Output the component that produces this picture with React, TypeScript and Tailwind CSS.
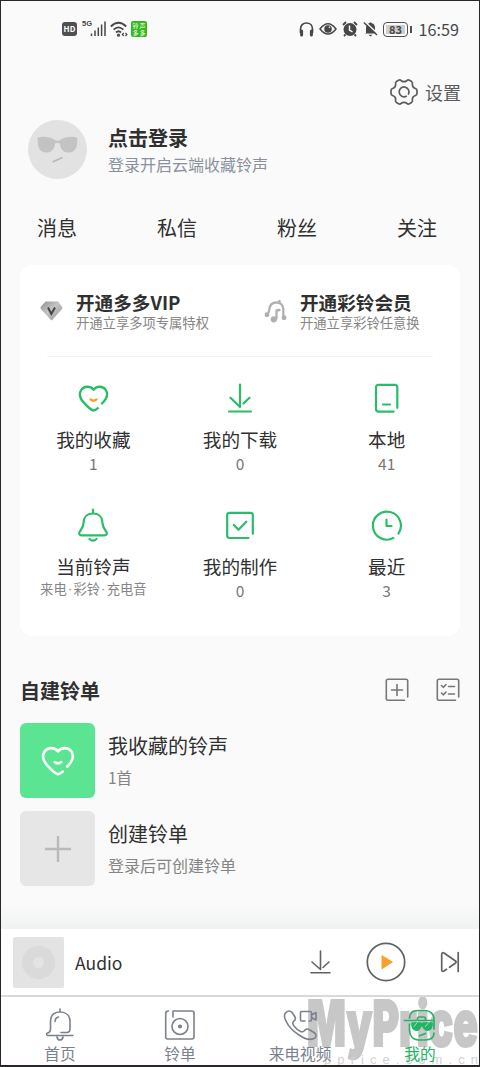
import type { ReactNode, SVGProps } from "react";

type IconProps = SVGProps<SVGSVGElement>;

function Line({ children, ...rest }: IconProps) {
  return (
    <svg fill="none" stroke="currentColor" strokeLinecap="round" strokeLinejoin="round" {...rest}>
      {children}
    </svg>
  );
}

function Heart({ smile, ...rest }: IconProps & { smile: string }) {
  return (
    <Line width="31" height="31" viewBox="0 0 32 32" strokeWidth="2.4" {...rest}>
      <path d="M24.7 21.2C30 16 31.6 11.500 28.600 7.100C25.800 3 19.400 2.700 16 6.900C12.600 2.700 6.200 3 3.400 7.100C.3 11.700 2.500 17 7.500 21.800C10 24.600 12.500 27.300 16 28.500C17.600 28.200 19 27.300 20.500 26" />
      <path d="M12.900 17Q16 19.600 19.100 17" stroke={smile} />
    </Line>
  );
}

function Download(props: IconProps) {
  return (
    <Line width="32" height="32" viewBox="0 0 32 32" strokeWidth="2.2" {...props}>
      <path d="M16 2.500V25L6.500 15.800M19.500 21.500L25.500 15.800M5 29.500H27" />
    </Line>
  );
}

function Phone() {
  return (
    <Line width="32" height="32" viewBox="0 0 32 32" strokeWidth="2.200">
      <path d="M26.300 25.800V5.300Q26.300 2.800 23.800 2.800H7.500Q5 2.800 5 5.300V26.800Q5 29.600 7.500 29.600H22.600M12 22.500H19" />
    </Line>
  );
}

function Bell() {
  return (
    <Line width="32" height="34" viewBox="0 0 32 34" strokeWidth="2.200">
      <path d="M16 1.500V5M16 5.500C10 5.500 6.500 9.500 6.500 15C6.500 19 5 20.500 2.800 23.500C1.500 25.500 2.500 27.300 4.500 27.300H27.500C29.500 27.300 30.500 25.500 29.200 23.500C27 20.500 25.500 19 25.500 15C25.500 9.500 22 5.500 16 5.500ZM12.500 31Q16 34.200 19.500 31" />
    </Line>
  );
}

function CheckBox() {
  return (
    <Line width="32" height="32" viewBox="0 0 32 32" strokeWidth="2.200">
      <path d="M28.800 24.800V6Q28.800 3.800 26.500 3.800H5.500Q3.200 3.800 3.200 6V26.500Q3.200 29 5.500 29H24.500M9.800 16L14.500 20.700L22.300 12.700" />
    </Line>
  );
}

function Clock() {
  return (
    <Line width="32" height="32" viewBox="0 0 32 32" strokeWidth="2.200">
      <path d="M27.500 24.500A14 14 0 1 0 22.300 29.100M15.500 10.700V17H20.500" />
    </Line>
  );
}

function Sunglasses() {
  return (
    <svg width="59" height="59" viewBox="0 0 59 59">
      <circle cx="29.500" cy="29.500" r="29.500" fill="#e2e2e2" />
      <path d="M9.500 18C12 16.200 22 16 26 19.500Q29.500 22 33 19.500C37 16 47 16.200 49.500 18L49 25C48 30 45 32.500 40.500 32.500C35.500 32.500 32.500 29.500 32 24L31 23H28L27 24C26.500 29.500 23.500 32.500 18.500 32.500C14 32.500 11 30 10 25Z" fill="#c3c3c3" />
      <path d="M24.500 42L34.500 37.500" stroke="#b8b8b8" strokeWidth="1.400" />
    </svg>
  );
}

function Gear() {
  return (
    <Line width="28" height="28" viewBox="0 0 28 28" strokeWidth="1.700">
      <path d="M8.600 2.300Q10 1.500 11.200 2.700Q14 4.700 16.800 2.700Q18 1.500 19.400 2.300L21.600 3.600Q22.800 4.500 22.400 6Q22 9.200 25.400 10.500Q27 11 27 12.500V15.500Q27 17 25.400 17.500Q22 18.800 22.400 22Q22.800 23.500 21.600 24.400L19.400 25.700Q18 26.500 16.800 25.300Q14 23.300 11.200 25.300Q10 26.500 8.600 25.700L6.400 24.400Q5.200 23.500 5.600 22Q6 18.800 2.600 17.500Q1 17 1 15.500V12.500Q1 11 2.600 10.500Q6 9.200 5.600 6Q5.200 4.500 6.400 3.600Z" />
      <path d="M16.200 18.300A4.900 4.900 0 1 1 18.500 16" />
    </Line>
  );
}

function Diamond() {
  return (
    <svg width="24" height="20" viewBox="0 0 24 20">
      <defs>
        <linearGradient id="gem" x2="1" y2="1">
          <stop stopColor="#8f8f8f" />
          <stop offset=".45" stopColor="#c4c4c4" />
          <stop offset="1" stopColor="#969696" />
        </linearGradient>
      </defs>
      <path d="M5.500 .6H18L22.200 6Q22.600 7 22 7.900L12.300 19Q11.600 19.700 10.900 19L.8 7.900Q.2 7 .6 6Z" fill="url(#gem)" />
      <path d="M8 6.500L11.300 13L15 6.500" fill="none" stroke="#444" strokeWidth="2" />
    </svg>
  );
}

function RingNote() {
  return (
    <Line width="24" height="24" viewBox="0 0 24 24" className="text-[#b0b0b0]" strokeWidth="2.300">
      <path d="M2.500 15.500Q5 14 5.300 10.500C5.800 5.500 9 3.500 12.500 3.500C17 3.500 19.300 6.500 19.300 10.500V18M15.500 3.500V2M12.500 19.500V11.500L15.500 11" />
      <circle cx="3" cy="15.800" r="1.300" fill="currentColor" />
      <circle cx="9.800" cy="20.300" r="2" fill="currentColor" />
      <circle cx="20" cy="18.800" r="1.300" fill="currentColor" />
    </Line>
  );
}

function StatusBar() {
  return (
    <div className="flex h-[58px] items-center justify-between pr-[21px] pl-[62px] text-[#474747]">
      <div className="flex items-center">
        <span className="flex h-[14px] w-[15px] items-center justify-center rounded-[3px] bg-[#505050] text-[8px] font-bold text-white">HD</span>
        <span className="mb-[10px] ml-[5px] w-[9px] font-['Liberation_Sans_Narrow','Liberation_Sans',sans-serif] text-[7.500px] leading-[8px] font-bold">5G</span>
        <svg className="ml-[-1px]" width="16" height="16" viewBox="0 0 16 16" stroke="currentColor" strokeWidth="1.500">
          <path d="M1.500 15V12.500M5 15V9.500M8.300 15V6.500M11.600 15V3.500M15 15V.5" />
        </svg>
        <svg className="ml-[4px]" width="18" height="16" viewBox="0 0 18 16" fill="none" stroke="currentColor" strokeWidth="1.800">
          <path d="M.8 5.500Q8.500 -2 16.200 5.500M3.600 8.700Q8.500 4 13.400 8.700M6 11.500Q8.500 9 11 11.500" />
          <circle cx="8.500" cy="14.200" r=".7" />
          <path d="M13.700 12L12.300 13.500L13.700 15M15.500 12L16.900 13.500L15.500 15" strokeWidth="1.200" />
        </svg>
        <span className="ml-[3px] grid h-4 w-4 grid-cols-2 place-items-center rounded-[2px] bg-[#34b81c] p-px text-[6px] leading-[7px] text-white">
          <span>铃</span><span>声</span><span>多</span><span>多</span>
        </span>
      </div>
      <div className="flex items-center">
        <svg width="15" height="15" viewBox="0 0 15 15" fill="none" stroke="currentColor" strokeWidth="1.700">
          <path d="M1.500 11V7.200C1.500 3.500 4 1 7.500 1S13.500 3.500 13.500 7.200V11" />
          <path d="M2.600 9V13M12.400 9V13" strokeWidth="3" strokeLinecap="round" />
        </svg>
        <svg className="ml-[5px]" width="18" height="14" viewBox="0 0 18 14" fill="none" stroke="currentColor" strokeWidth="1.500">
          <path d="M1 7Q9-3.500 17 7Q9 17 1 7Z" />
          <circle cx="9" cy="7" r="3" fill="currentColor" />
          <circle cx="10.500" cy="5.200" r=".8" fill="#fff" stroke="none" />
        </svg>
        <svg className="ml-[5px]" width="16" height="16" viewBox="0 0 16 16" fill="none">
          <circle cx="8" cy="8.500" r="6.500" fill="currentColor" />
          <path d="M1 4L4 1M15 4L12 1M3.500 13.500L2 15M12.500 13.500L14 15" stroke="currentColor" strokeWidth="1.800" />
          <path d="M7.500 4.500V9L10.500 11" stroke="#fff" strokeWidth="1.500" />
        </svg>
        <svg className="ml-[5px]" width="15" height="16" viewBox="0 0 15 16">
          <path d="M3 12V7C3 4 5 2.300 6.500 2Q7.500 .5 8.500 2C11 2.700 12 4.500 12 7V10L13.500 12.500H1.500ZM5.500 13.800H9.500L7.500 15.500Z" fill="currentColor" />
          <path d="M1.800 .5L15 13" stroke="#fafafa" strokeWidth="1.500" />
          <path d="M.8 1.500L14 14" stroke="currentColor" strokeWidth="1.300" />
        </svg>
        <span className="ml-[5px] flex h-[15px] w-[25px] items-center justify-center rounded-[4px] border-[1.500px] border-[#505050] p-[2px]">
          <span className="flex h-full w-full items-center justify-center bg-[#cecece] text-[11px] leading-none font-bold">83</span>
        </span>
        <span className="ml-[2px] h-[7px] w-[1.500px] bg-[#505050]" />
        <span className="ml-[7px] text-[16.200px] leading-6">16:59</span>
      </div>
    </div>
  );
}

function Feature({ icon, label, children }: { icon: ReactNode; label: string; children: ReactNode }) {
  return (
    <div className="flex flex-col items-center">
      <div className="flex h-8 items-center justify-center text-[#2abd69]">{icon}</div>
      <div className="mt-3 text-[18.600px] leading-[26px] text-[#303030]">{label}</div>
      <div className="text-[15.500px] leading-[22px] text-[#777]">{children}</div>
    </div>
  );
}

function Promo({ icon, title, note }: { icon: ReactNode; title: string; note: string }) {
  return (
    <div className="flex">
      <div className="flex h-[42px] w-[36px] shrink-0 items-center">{icon}</div>
      <div className="whitespace-nowrap">
        <div className="text-[18.600px] leading-6 font-bold text-[#303030]">{title}</div>
        <div className="text-[13.300px] leading-[18px] text-[#858585]">{note}</div>
      </div>
    </div>
  );
}

function NavItem({ icon, label, active = false }: { icon: ReactNode; label: string; active?: boolean }) {
  return (
    <div className={`relative flex w-[120px] flex-col items-center pt-[10px] ${active ? "text-[#22b465]" : "text-[#7b818e]"}`}>
      {icon}
      <span className="text-[15.700px] leading-[22px]">{label}</span>
    </div>
  );
}

export default function App() {
  return (
    <div className="relative h-[1067px] w-[480px] overflow-hidden bg-[#fafafa] font-['Noto_Sans_CJK_SC',sans-serif]">
      <StatusBar />

      <div className="flex h-[62px] items-center justify-end pt-[6px] pr-[19px] text-[#5c5c5c]">
        <Gear />
        <span className="ml-[7px] text-[18px] leading-6">设置</span>
      </div>

      <div className="flex h-[59px] pl-7">
        <Sunglasses />
        <div className="ml-[21px] pt-[5px]">
          <div className="text-[20px] leading-[26px] font-bold text-[#303030]">点击登录</div>
          <div className="mt-[2px] text-[16px] leading-[23px] text-[#8b919c]">登录开启云端收藏铃声</div>
        </div>
      </div>

      <div className="ml-[-3px] flex h-[86px] w-[480px] items-center pt-[12px] text-center text-[20px] text-[#303030]">
        {["消息", "私信", "粉丝", "关注"].map((tab) => (
          <span key={tab} className="w-[120px]">{tab}</span>
        ))}
      </div>

      <section className="mx-5 h-[371px] rounded-xl bg-white pt-[25px]">
        <div className="flex h-[66px] pl-5">
          <div className="w-[224px]">
            <Promo icon={<Diamond />} title="开通多多VIP" note="开通立享多项专属特权" />
          </div>
          <Promo icon={<RingNote />} title="开通彩铃会员" note="开通立享彩铃任意换" />
        </div>
        <div className="mx-[27px] h-px bg-[#f3f3f3]" />
        <div className="grid grid-cols-3 gap-y-[35px] pt-[25px]">
          <Feature icon={<Heart smile="#f5a023" />} label="我的收藏">1</Feature>
          <Feature icon={<Download />} label="我的下载">0</Feature>
          <Feature icon={<Phone />} label="本地">41</Feature>
          <Feature icon={<Bell />} label="当前铃声">
            <span className="flex text-[13.300px] leading-[19px] whitespace-nowrap text-[#858585]">
              来电<span className="w-[6.700px] text-center font-['Liberation_Sans',sans-serif]">·</span>
              彩铃<span className="w-[6.700px] text-center font-['Liberation_Sans',sans-serif]">·</span>
              充电音
            </span>
          </Feature>
          <Feature icon={<CheckBox />} label="我的制作">0</Feature>
          <Feature icon={<Clock />} label="最近">3</Feature>
        </div>
      </section>

      <div className="mt-[31px] flex h-[46px] items-center pr-5 pl-5 text-[#777]">
        <h2 className="flex-1 pt-px text-[20px] leading-7 font-bold text-[#303030]">自建铃单</h2>
        <Line width="24" height="24" viewBox="0 0 24 24" strokeWidth="1.600">
          <path d="M22.700 19V3Q22.700 1.300 21 1.300H3Q1.300 1.300 1.300 3V20.500Q1.300 22.200 3 22.200H19.500M12 6.500V17.500M6.500 12H17.500" />
        </Line>
        <Line className="ml-[27px]" width="24" height="24" viewBox="0 0 24 24" strokeWidth="1.600">
          <path d="M22.700 19V3Q22.700 1.300 21 1.300H3Q1.300 1.300 1.300 3V20.500Q1.300 22.200 3 22.200H19.500M5.500 7.500L7.500 9.300L10 6.500M12.500 8.500H18.500M5.500 15L7.500 16.800L10 14M12.500 16H18.500" />
        </Line>
      </div>

      <div className="mt-[10px] flex h-[75px] pl-5">
        <div className="flex w-[75px] items-center justify-center rounded-md bg-[#5be593] text-white">
          <Heart smile="currentColor" width="34" height="34" />
        </div>
        <div className="ml-[13px] pt-[9px]">
          <div className="text-[20px] leading-7 text-[#303030]">我收藏的铃声</div>
          <div className="mt-[6px] text-[15.500px] leading-[23px] text-[#858585]">1首</div>
        </div>
      </div>
      <div className="mt-[13px] flex h-[75px] pl-5">
        <div className="flex w-[75px] items-center justify-center rounded-md bg-[#e6e6e6] text-[#b9b9b9]">
          <svg width="26" height="26" viewBox="0 0 26 26" stroke="currentColor" strokeWidth="2.400">
            <path d="M13 0V26M0 13H26" />
          </svg>
        </div>
        <div className="ml-[13px] pt-[9px]">
          <div className="text-[20px] leading-7 text-[#303030]">创建铃单</div>
          <div className="mt-[6px] text-[16px] leading-[23px] text-[#858585]">登录后可创建铃单</div>
        </div>
      </div>

      <div className="h-[43px] bg-linear-to-b from-[#fafafa] from-40% to-[#f0f2f1]" />
      <div className="flex h-[66px] items-center bg-white pl-[13px] text-[#626262]">
        <svg width="51" height="51" viewBox="0 0 51 51">
          <rect width="51" height="51" rx="2" fill="#e3e3e3" />
          <circle cx="25.500" cy="25.500" r="16.500" fill="#dadada" />
          <circle cx="25.500" cy="25.500" r="5.500" fill="#e3e3e3" />
        </svg>
        <span className="ml-[11px] w-[234px] pt-[2px] text-[17.500px] leading-6 text-[#303030]">Audio</span>
        <Line width="22" height="24" viewBox="0 0 22 24" strokeWidth="1.600">
          <path d="M11.500 1V19.500L3 12M14 17.500L20 12M2 22.700H21" />
        </Line>
        <svg className="ml-[35px]" width="40" height="40" viewBox="0 0 40 40">
          <circle cx="20" cy="20" r="18.700" fill="none" stroke="currentColor" strokeWidth="1.700" />
          <path d="M16 13.700L26.300 20L16 26.800Z" fill="#fba02a" stroke="#fba02a" strokeWidth="1" strokeLinejoin="round" />
        </svg>
        <Line className="ml-[34px]" width="20" height="22" viewBox="0 0 20 22" strokeWidth="1.700">
          <path d="M18.200 1.500V20.500M6.500 18.300L4 20Q1.700 21 1.700 18.500V3.500Q1.700 1 4 2L15.500 10Q16.700 11 15.500 12L9.500 16.300" />
        </Line>
      </div>
      <div className="h-[2px] bg-[#d9d9d9]" />

      <nav className="relative flex h-[70px] bg-white">
        <svg className="absolute top-0 left-[300px]" width="180" height="70" viewBox="0 0 180 70" fill="#c7c7c7">
          <text x="7" y="49" textLength="171" lengthAdjust="spacingAndGlyphs" stroke="#c7c7c7" strokeWidth="2" className="font-['Inter',sans-serif] text-[63px] font-black">MyPrice</text>
          <text x="24" y="67" textLength="154" fill="#d2d2d2" className="font-['Liberation_Sans',sans-serif] text-[13px]">pprice.com.cn</text>
        </svg>
        <NavItem
          label="首页"
          icon={
            <Line width="32" height="36" viewBox="0 0 32 36" strokeWidth="1.600">
              <path d="M16 2V5M17 25.500H22.500Q26 25.500 26 22V14.500C26 8.500 22 5 16 5S6.500 8.500 6.500 14.500V21.500Q6.500 25.500 3.500 26C2 26.500 2.500 28.500 4 28.500H29M11 14.500Q11.300 10.500 14.500 10M13 30Q13.500 33 16 33T19 30" />
            </Line>
          }
        />
        <NavItem
          label="铃单"
          icon={
            <Line width="32" height="36" viewBox="0 0 32 36" strokeWidth="1.600">
              <path d="M9 10V4H28Q30 4 30 6V30Q30 32 28 32H3.700Q1.700 32 1.700 30V6.500Q1.700 4 4.500 4" />
              <circle cx="16" cy="19.500" r="8" />
              <circle cx="16" cy="19.500" r="1.300" fill="currentColor" />
            </Line>
          }
        />
        <NavItem
          label="来电视频"
          icon={
            <Line width="34" height="36" viewBox="0 0 34 36" strokeWidth="1.600">
              <path d="M3 5.500C5 3.500 8 3.500 9.500 6L12 10C13 12 12 13.500 10.500 14.500C9.500 15.500 9.500 17 11 19C13 21.500 15 23.500 17.500 24.500C19 25.200 20 25 21 24C22.500 22 24.500 21.500 26.500 22.800L31 25.500C34 27.500 33.500 30 31 31.500C27 33.500 21 31.500 16 28C10.500 24.500 5 19 2.500 13C1 9.500 1 7 3 5.500ZM22 14H18.500Q17.500 14 17.500 13V5.500Q17.500 4.500 18.500 4.500H27.500Q28.500 4.500 28.500 5.500V13Q28.500 14 27.500 14H26M28.500 8L33 5.500V13L28.500 10.500" />
            </Line>
          }
        />
        <NavItem
          active
          label="我的"
          icon={
            <Line width="34" height="36" viewBox="0 0 34 36" strokeWidth="1.700">
              <path d="M6.500 11C6.500 6 10 3.500 15 3.500H22C27 3.500 31 7 31 12V22M6.500 17V23C6.500 29 10 33 16 33H22C27 33 31 31 31 26M1.500 13.500H31M14.500 13V11.500Q14.500 10 16 10H21Q22.500 10 22.500 11.500V13" />
              <path d="M16.500 28.800L22.500 26.500" />
              <path d="M9 16H17L18.700 17L20.500 16H29V18C28.500 21.500 26.500 23.200 24.500 23.200S20.500 21 20 19H17.700C17 21.500 15.500 23.200 13.500 23.200S9.500 21.500 9 18Z" fill="currentColor" />
              <path d="M11 19.500L13.500 16.500M22.500 19.500L25 16.500" stroke="#a9e2c3" strokeWidth="1" />
            </Line>
          }
        />
      </nav>
      <div className="pointer-events-none absolute inset-0 border border-b-2 border-[#29262a]" />
    </div>
  );
}
